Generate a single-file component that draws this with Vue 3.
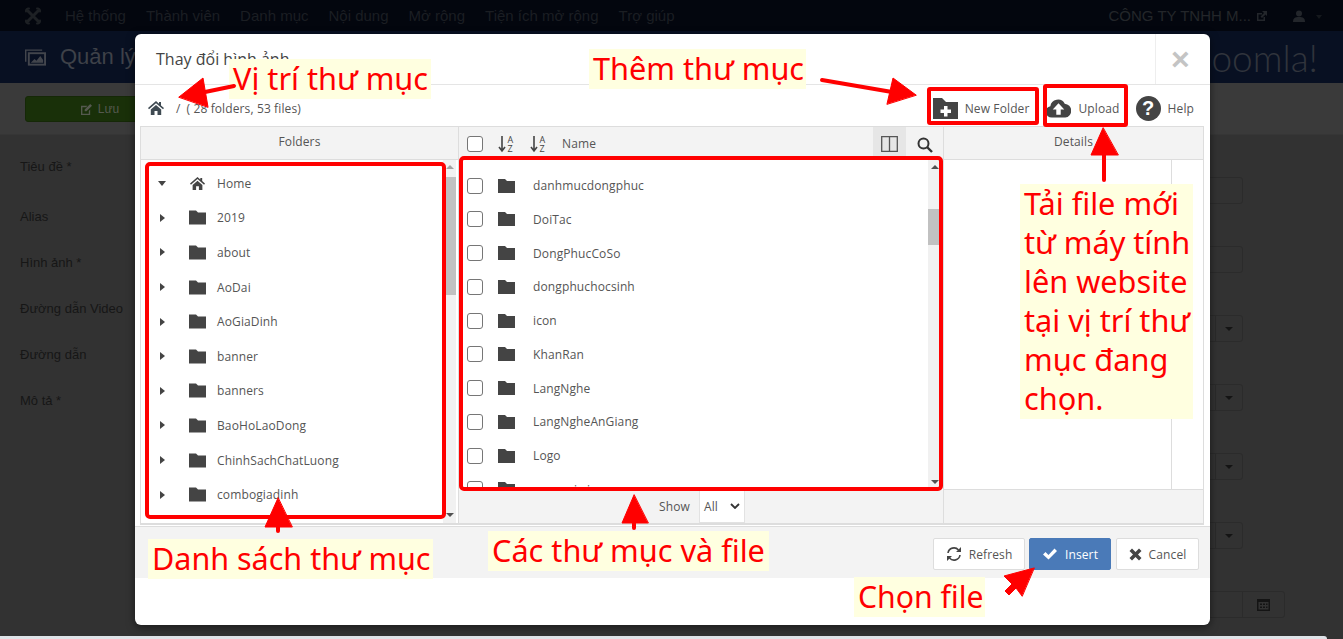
<template>
  <div class="page">
    <nav class="navbar">
      <svg class="j-logo" viewBox="0 0 18 18">
        <g fill="none" stroke="#1d2024" stroke-width="3" stroke-linecap="round">
          <path d="M3.500 3.500l11 11M14.500 3.500l-11 11" />
          <path d="M5 1.500a2.500 2.500 0 0 0-3 3M13 1.500a2.500 2.500 0 0 1 3 3M5 16.500a2.500 2.500 0 0 1-3-3M13 16.500a2.500 2.500 0 0 0 3-3" stroke-width="2" />
        </g>
      </svg>
      <span v-for="item in navItems" :key="item" class="nav-item">{{ item }}</span>
      <span class="nav-right">CÔNG TY TNHH M...</span>
      <svg class="nav-ext" viewBox="0 0 10 10"><path d="M0 2h5v1.500H1.500v5h5V6H8v4H0zM5 0h5v5L8.500 3.500 5 7 3.500 5.500 7 2z" fill="#23262b" /></svg>
      <svg class="nav-user" viewBox="0 0 12 12"><circle cx="6" cy="3.500" r="3" fill="#23262b" /><path d="M0 12c0-4 2-5 6-5s6 1 6 5z" fill="#23262b" /></svg>
      <span class="nav-caret"></span>
    </nav>
    <header class="head">
      <svg class="head-icon" viewBox="0 0 22 17"><path d="M0 0h18v1.500H1.500V13H0z" fill="#42454c" /><path d="M3 3h19v14H3z" fill="#42454c" /><path d="M5 5h15v10H5z" fill="#081022" /><path d="M6 14l4-4 2 2 4-5 3 4v3z" fill="#42454c" /></svg>
      <span class="head-title">Quản lý</span>
      <span class="head-logo">Joomla!</span>
    </header>
    <div class="subhead">
      <button class="save-btn">
        <svg viewBox="0 0 12 12"><path d="M0 2h7L5.500 3.500h-4v7h7v-3L10 6v6H0zM10 0l2 2-6 6H4V6z" fill="#55594f" /></svg>
        Lưu
      </button>
    </div>
    <main class="form">
      <div class="labels">
        <span v-for="label in formLabels" :key="label">{{ label }}</span>
      </div>
      <div class="fields">
        <div v-for="n in 2" :key="n" class="field"></div>
        <div v-for="n in 4" :key="'s' + n" class="field select"><span class="select-cell"><i></i></span></div>
        <div class="field date">
          <span class="select-cell">
            <svg viewBox="0 0 13 13"><path d="M0 1h13v12H0zM1.500 4v7.500h10V4zM3 5.500h2v1.500H3zm3 0h2v1.500H6zm3 0h1.500v1.500H9zM3 8.500h2V10H3zm3 0h2V10H6zm3 0h1.500V10H9z" fill="#141414" fill-rule="evenodd" /></svg>
          </span>
        </div>
      </div>
    </main>
    <div class="browser-strip"></div>

    <section class="modal">
      <div class="modal-head">
        <h3>Thay đổi hình ảnh</h3>
        <div class="close">×</div>
      </div>
      <div class="toolbar">
        <svg class="tb-home" viewBox="0 0 16 16"><path :d="homePath" fill="#3f4a52" /></svg>
        <span class="crumb-sep">/</span>
        <span class="crumb-count">( 28 folders, 53 files)</span>
        <span class="tb-action new-folder">
          <svg viewBox="0 0 25 21"><path d="M0 0h9l4 4h12v17H0z" fill="#444" /><path d="M11 8h3.500v3.500H18V15h-3.500v3.500H11V15H7.500v-3.500H11z" fill="#fff" /></svg>
          New Folder
        </span>
        <span class="tb-action upload">
          <svg viewBox="0 0 26 20"><path d="M6 20a6 6 0 0 1-1.500-11.800A8 8 0 0 1 19.500 5.500 7.300 7.300 0 0 1 20 20z" fill="#444" /><path d="M13 5l6 6.500h-3.700V17h-4.600v-5.500H7z" fill="#fff" /></svg>
          Upload
        </span>
        <span class="tb-action help"><b>?</b>Help</span>
      </div>

      <div class="panels">
        <div class="col folders">
          <div class="col-head">Folders</div>
          <div class="col-body">
            <ul class="tree">
              <li v-for="(name, i) in folders" :key="name">
                <i :class="i === 0 ? 'tri-down' : 'tri-right'"></i>
                <svg v-if="i === 0" class="row-icon" viewBox="0 0 16 16"><path :d="homePath" fill="#444" /></svg>
                <svg v-else class="row-icon" viewBox="0 0 17 14"><path :d="folderPath" fill="#444" /></svg>
                {{ name }}
              </li>
            </ul>
            <div class="scrollbar light">
              <i class="arrow-up"></i>
              <div class="thumb tree-thumb"></div>
              <i class="arrow-down"></i>
            </div>
          </div>
        </div>

        <div class="col files">
          <div class="col-head files-head">
            <span class="check"></span>
            <svg class="sort" viewBox="0 0 17 18">
              <path d="M4 1v14M1 12l3 4 3-4" fill="none" stroke="#444" stroke-width="1.600" />
              <text x="9.500" y="8" font-size="9">A</text><text x="9.500" y="17" font-size="9">Z</text>
            </svg>
            <svg class="sort" viewBox="0 0 17 18">
              <path d="M4 1v14M1 12l3 4 3-4" fill="none" stroke="#444" stroke-width="1.600" />
              <text x="9.500" y="8" font-size="9">A</text><text x="9.500" y="17" font-size="9">Z</text>
            </svg>
            <span class="name-label">Name</span>
            <span class="view-toggle">
              <svg viewBox="0 0 17 16"><path d="M.7.700h15.600v14.600H.7zM8.500.7v14.600" fill="none" stroke="#555" stroke-width="1.300" /></svg>
            </span>
            <span class="search-btn">
              <svg viewBox="0 0 16 16"><circle cx="6.500" cy="6.500" r="5" fill="none" stroke="#333" stroke-width="2" /><path d="M10 10l5 5" stroke="#333" stroke-width="2.400" /></svg>
            </span>
          </div>
          <div class="col-body file-body">
            <div class="file-clip">
              <ul class="file-list">
                <li v-for="name in files" :key="name">
                  <span class="check"></span>
                  <svg class="file-icon" viewBox="0 0 17 14"><path :d="folderPath" fill="#444" /></svg>
                  {{ name }}
                </li>
              </ul>
            </div>
            <div class="scrollbar">
              <i class="arrow-up dark"></i>
              <div class="thumb file-thumb"></div>
              <i class="arrow-down dark"></i>
            </div>
          </div>
          <div class="col-foot show-row">
            <span>Show</span>
            <span class="show-select">All
              <svg viewBox="0 0 10 6"><path d="M1 1l4 4 4-4" fill="none" stroke="#333" stroke-width="1.800" /></svg>
            </span>
          </div>
        </div>

        <div class="col details">
          <div class="col-head">Details</div>
          <div class="details-body"><div class="details-side"></div></div>
          <div class="col-foot"></div>
        </div>
      </div>

      <div class="modal-foot">
        <button class="btn btn-refresh">
          <svg viewBox="0 0 16 16"><path d="M2 7a6 6 0 0 1 10.500-3M14 9a6 6 0 0 1-10.500 3" fill="none" stroke="#444" stroke-width="1.600" /><path d="M15 1v5h-5zM1 15v-5h5z" fill="#444" /></svg>
          Refresh
        </button>
        <button class="btn primary">
          <svg viewBox="0 0 16 13"><path d="M1 7l2.500-2.500L6.500 7.500 12.500 1 15 3.500 6.500 12z" fill="#fff" /></svg>
          Insert
        </button>
        <button class="btn btn-cancel">
          <svg viewBox="0 0 13 13"><path d="M3 .5l3.500 3.500L10 .5 12.500 3 9 6.500l3.500 3.500-2.500 2.500L6.500 9 3 12.500.5 10 4 6.500.5 3z" fill="#444" /></svg>
          Cancel
        </button>
      </div>
    </section>

    <!-- red notes drawn over the screenshot -->
    <span class="note note-path">Vị trí thư mục</span>
    <span class="note note-add">Thêm thư mục</span>
    <span class="note note-tree">Danh sách thư mục</span>
    <span class="note note-files">Các thư mục và file</span>
    <span class="note note-pick">Chọn file</span>
    <span class="note note-upload">Tải file mới<br />từ máy tính<br />lên website<br />tại vị trí thư<br />mục đang<br />chọn.</span>

    <div class="box box-new"></div>
    <div class="box box-upload"></div>
    <div class="box box-tree"></div>
    <div class="box box-files"></div>

    <svg class="arrows" viewBox="0 0 1343 639">
      <g fill="#f00" stroke="#f00" stroke-linecap="round">
        <path d="M234 86L205 92" stroke-width="4" />
        <path d="M179 97L203 78 208 107z" stroke-width="1" />
        <path d="M822 80L892 92" stroke-width="4" />
        <path d="M916 95L893 78 887 104z" stroke-width="1" />
        <path d="M1104 180V150" stroke-width="4" />
        <path d="M1103 128L1091 155 1118 155z" stroke-width="1" />
        <path d="M278 531V520" stroke-width="4" />
        <path d="M278 498L265 527 292 527z" stroke-width="1" />
        <path d="M634 528V518" stroke-width="4" />
        <path d="M634 495L622 523 648 523z" stroke-width="1" />
        <path d="M1034 568L1004 576 1012 584 1005 591 1009 595 1016 588 1022 596z" stroke-width="1" />
      </g>
    </svg>
  </div>
</template>

<script setup>
const navItems = ['Hệ thống', 'Thành viên', 'Danh mục', 'Nội dung', 'Mở rộng', 'Tiện ích mở rộng', 'Trợ giúp']
const formLabels = ['Tiêu đề *', 'Alias', 'Hình ảnh *', 'Đường dẫn Video', 'Đường dẫn', 'Mô tả *']
const folders = ['Home', '2019', 'about', 'AoDai', 'AoGiaDinh', 'banner', 'banners', 'BaoHoLaoDong', 'ChinhSachChatLuong', 'combogiadinh']
const files = ['cuahang', 'danhmucdongphuc', 'DoiTac', 'DongPhucCoSo', 'dongphuchocsinh', 'icon', 'KhanRan', 'LangNghe', 'LangNgheAnGiang', 'Logo', 'may-vai-sieu']

const homePath = 'M8 1L0 8l1 1.200 7-6 7 6 1-1.200-3-2.600V2h-2v1.800zM2.800 9.500L8 5l5.200 4.500V15H9.500v-4h-3v4H2.800z'
const folderPath = 'M0 0h7l2 2h8v12H0z'
</script>

<style>
html,
body {
  margin: 0;
  overflow: hidden;
}
</style>

<style scoped>
* {
  box-sizing: border-box;
}

.page {
  position: relative;
  width: 1343px;
  height: 639px;
  overflow: hidden;
  display: flex;
  flex-direction: column;
  background: #323232;
  font-family: 'Liberation Sans', Arial, sans-serif;
}

.navbar {
  height: 31px;
  flex: none;
  display: flex;
  align-items: center;
  padding-left: 24px;
  background: #03060e;
  color: #1b1e23;
  font-size: 15px;
}

.j-logo {
  width: 18px;
  height: 18px;
  margin-right: 23px;
}

.nav-item {
  margin-right: 20px;
}

.nav-right {
  margin-left: auto;
  color: #23262a;
}

.nav-ext {
  width: 10px;
  height: 10px;
  margin-left: 6px;
}

.nav-user {
  width: 12px;
  height: 12px;
  margin-left: 26px;
}

.nav-caret {
  width: 0;
  height: 0;
  margin: 2px 21px 0 11px;
  border: 3px solid transparent;
  border-top: 4px solid #15181d;
  border-bottom: 0;
}

.head {
  height: 52px;
  flex: none;
  display: flex;
  align-items: center;
  padding: 0 25px;
  background: #081022;
  color: #3e4148;
}

.head-icon {
  width: 21px;
  height: 17px;
  margin-right: 14px;
}

.head-title {
  font-size: 22px;
}

.head-logo {
  margin-left: auto;
  font-family: Lato, sans-serif;
  font-weight: 300;
  font-size: 37px;
  color: #30343c;
}

.subhead {
  height: 52px;
  flex: none;
  padding: 13px 25px;
  background: #3a3a3a;
  border-bottom: 1px solid #363636;
}

.save-btn {
  display: flex;
  align-items: center;
  justify-content: center;
  gap: 6px;
  width: 150px;
  height: 26px;
  background: #193009;
  border: 1px solid #152807;
  border-radius: 3px;
  color: #55594f;
  font: 12px 'Liberation Sans', sans-serif;
}

.save-btn svg {
  width: 11px;
  height: 11px;
}

.form {
  flex: 1;
  display: flex;
  justify-content: space-between;
  padding: 0 100px 0 20px;
  min-height: 0;
}

.labels {
  display: flex;
  flex-direction: column;
  gap: 30px;
  padding-top: 24px;
  font-size: 13px;
  line-height: 16px;
  color: #161616;
}

.labels span:nth-child(2) {
  margin-top: 4px;
}

.fields {
  display: flex;
  flex-direction: column;
  gap: 42px;
  padding-top: 42px;
  align-items: flex-end;
}

.field {
  display: flex;
  justify-content: flex-end;
  width: 100px;
  height: 27px;
  flex: none;
  border: 1px solid #2b2b2b;
  border-radius: 3px;
}

.select-cell {
  width: 27px;
  display: flex;
  align-items: center;
  justify-content: center;
  border-left: 1px solid #2b2b2b;
}

.select-cell i {
  border: 4px solid transparent;
  border-top: 4px solid #141414;
  border-bottom: 0;
}

.date {
  margin-right: -42px;
}

.date .select-cell {
  width: 42px;
}

.date svg {
  width: 13px;
  height: 13px;
}

.browser-strip {
  flex: none;
  width: 1327px;
  height: 3px;
  background: #dfe3e8;
  border-top-right-radius: 3px;
}

.modal {
  position: absolute;
  left: 135px;
  top: 34px;
  width: 1075px;
  height: 591px;
  background: #fff;
  border-radius: 6px;
  box-shadow: 0 2px 8px rgba(0, 0, 0, 0.5);
  font-family: 'Open Sans', sans-serif;
  font-size: 12px;
  letter-spacing: 0.12px;
  color: #555;
  display: flex;
  flex-direction: column;
}

.modal-head {
  height: 51px;
  flex: none;
  display: flex;
  border-bottom: 1px solid #e5e5e5;
}

.modal-head h3 {
  margin: 0;
  padding: 14px 0 0 21px;
  flex: 1;
  font-size: 16px;
  line-height: 22px;
  font-weight: 400;
  letter-spacing: 0;
  color: #444;
}

.close {
  width: 55px;
  padding-right: 5px;
  border-left: 1px solid #eee;
  text-align: center;
  font: bold 32px/50px 'Liberation Sans', sans-serif;
  color: #c4c4c4;
}

.toolbar {
  height: 41px;
  flex: none;
  display: flex;
  align-items: center;
  padding: 5px 16px 0 13px;
}

.tb-home {
  width: 16px;
  height: 16px;
}

.crumb-sep {
  margin-left: 12px;
}

.crumb-count {
  margin-left: 6px;
}

.tb-action {
  display: flex;
  align-items: center;
  gap: 7px;
}

.new-folder {
  margin-left: auto;
}

.new-folder svg {
  width: 25px;
  height: 21px;
}

.upload {
  margin-left: 17px;
}

.upload svg {
  width: 25px;
  height: 20px;
}

.help {
  margin-left: 16px;
}

.help b {
  width: 25px;
  height: 25px;
  border-radius: 50%;
  background: #444;
  color: #fff;
  text-align: center;
  font: bold 20px/25px 'Liberation Sans', sans-serif;
}

.panels {
  height: 399px;
  flex: none;
  margin: 0 6px 0 5px;
  display: flex;
  border: 1px solid #ddd;
  border-bottom-width: 2px;
}

.col {
  display: flex;
  flex-direction: column;
  background: #f3f3f3;
  min-height: 0;
}

.folders {
  width: 318px;
  border-right: 1px solid #ddd;
}

.files {
  width: 485px;
  border-right: 1px solid #ddd;
}

.details {
  flex: 1;
}

.col-head {
  height: 33px;
  flex: none;
  border-bottom: 1px solid #ddd;
  text-align: center;
  line-height: 29px;
}

.col-body {
  flex: 1;
  display: flex;
  min-height: 0;
  background: #fff;
}

.tree {
  flex: 1;
  margin: 0;
  padding: 6px 0 0;
  list-style: none;
}

.tree li {
  height: 34.600px;
  display: flex;
  align-items: center;
  padding-left: 17px;
}

.tri-down {
  width: 0;
  height: 0;
  border: 4px solid transparent;
  border-top: 5px solid #444;
  border-bottom: 0;
  margin-right: 23px;
}

.tri-right {
  width: 0;
  height: 0;
  margin-left: 2px;
  border: 4px solid transparent;
  border-left: 5px solid #444;
  border-right: 0;
  margin-right: 24px;
}

.row-icon {
  width: 17px;
  height: 15px;
  margin-right: 11px;
}

.scrollbar {
  width: 13px;
  flex: none;
  margin-right: 2px;
  background: #f1f1f1;
  display: flex;
  flex-direction: column;
  align-items: center;
}

.arrow-up {
  margin-top: 5px;
  border: 4px solid transparent;
  border-bottom: 4px solid #a3a3a3;
  border-top: 0;
}

.arrow-down {
  margin-top: auto;
  margin-bottom: 6px;
  border: 4px solid transparent;
  border-top: 4px solid #505050;
  border-bottom: 0;
}

.arrow-up.dark {
  border-bottom-color: #505050;
}

.thumb {
  width: 100%;
  background: #c1c1c1;
}

.tree-thumb {
  height: 118px;
  margin-top: 8px;
}

.file-thumb {
  height: 36px;
  margin-top: 40px;
}

.files-head {
  display: flex;
  align-items: center;
  padding-left: 8px;
  text-align: left;
}

.files-head .check,
.files-head .sort {
  margin-top: 2px;
}

.check {
  width: 16px;
  height: 16px;
  flex: none;
  background: #fff;
  border: 1px solid #767676;
  border-radius: 3px;
}

.sort {
  width: 17px;
  height: 18px;
  margin-left: 15px;
  overflow: visible;
}

.sort text {
  fill: #444;
  font-family: 'Open Sans', sans-serif;
}

.name-label {
  margin: 2px 0 0 15px;
  line-height: 18px;
}

.view-toggle {
  margin-left: auto;
  width: 33px;
  height: 32px;
  padding-top: 2px;
  background: #e6e6e6;
  display: flex;
  align-items: center;
  justify-content: center;
}

.view-toggle svg {
  width: 17px;
  height: 16px;
}

.search-btn {
  width: 37px;
  height: 32px;
  padding-top: 3px;
  display: flex;
  align-items: center;
  justify-content: center;
}

.search-btn svg {
  width: 16px;
  height: 16px;
}

.file-clip {
  flex: 1;
  overflow: hidden;
}

.file-list {
  margin: -25px 0 0;
  padding: 0;
  list-style: none;
}

.file-list li {
  height: 33.750px;
  display: flex;
  align-items: center;
  padding-left: 8px;
}

.file-icon {
  width: 17px;
  height: 14px;
  margin: 0 18px 0 15px;
}

.col-foot {
  height: 33px;
  flex: none;
}

.show-row {
  display: flex;
  justify-content: flex-end;
  align-items: center;
  gap: 9px;
  padding-right: 198px;
}

.show-select {
  width: 46px;
  height: 32px;
  display: flex;
  align-items: center;
  justify-content: space-between;
  padding: 0 4px;
  background: #fff;
  border: 1px solid #e2e2e2;
  border-top: 0;
}

.show-select svg {
  width: 10px;
  height: 6px;
}

.details-body {
  flex: 1;
  background: #fff;
  min-height: 0;
  border-bottom: 1px solid #ddd;
  display: flex;
  justify-content: flex-end;
}

.details-side {
  width: 32px;
  border-left: 1px solid #ddd;
}

.modal-foot {
  height: 52px;
  flex: none;
  margin-top: 1px;
  border-top: 1px solid #ddd;
  background: #f3f3f3;
  display: flex;
  justify-content: flex-end;
  align-items: flex-start;
  gap: 4px;
  padding: 11px 11px 0 0;
}

.btn {
  width: 82px;
  height: 32px;
  padding: 0;
  display: flex;
  align-items: center;
  justify-content: center;
  gap: 7px;
  background: #fff;
  border: 1px solid #ddd;
  border-radius: 2px;
  color: #555;
  font: 12px 'Open Sans', sans-serif;
  letter-spacing: 0.12px;
}

.btn svg {
  width: 16px;
  height: 16px;
}

.btn-refresh {
  width: 92px;
}

.btn-cancel {
  width: 83px;
  margin-left: 1px;
}

.btn-cancel svg {
  width: 13px;
  height: 13px;
}

.primary {
  background: #4a7ab8;
  border-color: #4a7ab8;
  color: #fff;
}

.note {
  position: absolute;
  padding: 0 4px 1px;
  background: #ffffe0;
  color: #f00;
  font-family: 'Noto Sans', sans-serif;
  font-size: 30.700px;
  line-height: 39px;
  white-space: nowrap;
}

.note-path {
  left: 229px;
  top: 59px;
  width: 202px;
}

.note-add {
  left: 589px;
  top: 49px;
  width: 217px;
}

.note-tree {
  left: 148px;
  top: 539px;
  width: 285px;
  font-size: 30.500px;
}

.note-files {
  left: 488px;
  top: 531px;
  width: 281px;
}

.note-pick {
  left: 854px;
  top: 577px;
  width: 131px;
  font-size: 30.200px;
}

.note-upload {
  left: 1020px;
  top: 184px;
  width: 173px;
}

.box {
  position: absolute;
  border: 4px solid #f00;
  border-radius: 3px;
}

.box-new {
  left: 927px;
  top: 87px;
  width: 112px;
  height: 38px;
}

.box-upload {
  left: 1043px;
  top: 84px;
  width: 85px;
  height: 43px;
}

.box-tree {
  left: 145px;
  top: 162px;
  width: 301px;
  height: 357px;
  border-radius: 5px;
}

.box-files {
  left: 459px;
  top: 156px;
  width: 484px;
  height: 335px;
  border-radius: 5px;
}

.arrows {
  position: absolute;
  left: 0;
  top: 0;
  width: 1343px;
  height: 639px;
  pointer-events: none;
}
</style>
